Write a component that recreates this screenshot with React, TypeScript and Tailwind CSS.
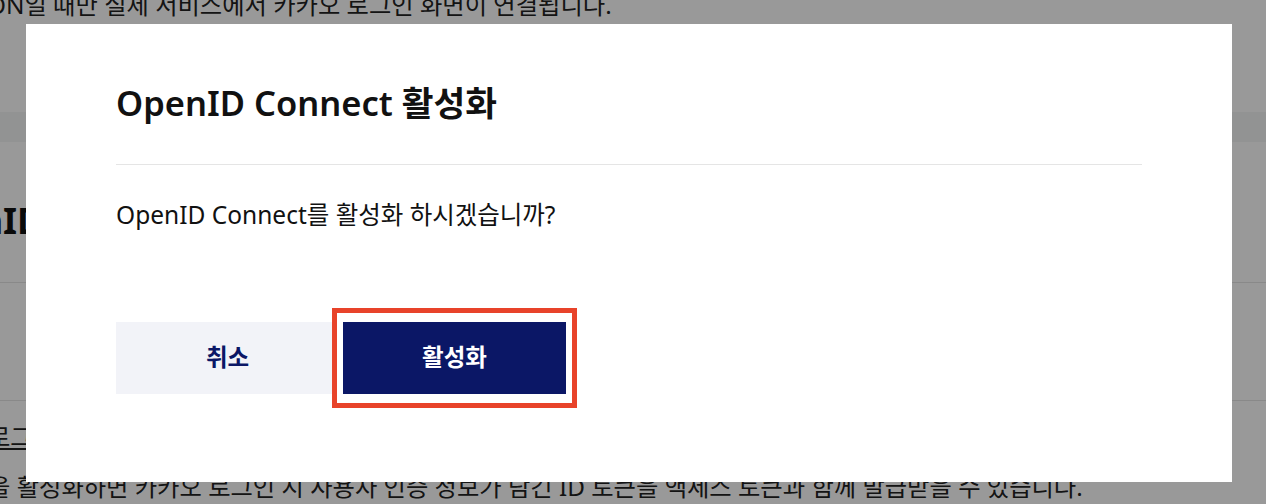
export default function App() {
  return (
    <div className="relative h-[504px] w-full overflow-hidden bg-white font-['Noto_Sans','Noto_Sans_CJK_KR',sans-serif] text-[#222]">
      {/* 뒤쪽 페이지 */}
      <div className="flex flex-col">
        <div className="h-[112px]">
          <p className="-mt-[12px] -ml-[13px] text-[24.3px] leading-[34px] whitespace-nowrap">
            ON일 때만 실제 서비스에서 카카오 로그인 화면이 연결됩니다.
          </p>
        </div>
        <div className="h-[30px] bg-[#f4f6f6]" />
        <div className="h-[140px] pt-[55px]">
          <h2 className="-ml-[93px] text-[36px] leading-[48px] font-bold whitespace-nowrap text-[#111]">
            OpenID Connect
          </h2>
        </div>
        <div className="h-[118px] border-t border-[#e5e5e5]" />
        <div className="border-t border-[#e5e5e5] pt-[19px]">
          <p className="-ml-[12px] text-[24.3px] leading-[34px] whitespace-nowrap">
            <span className="underline">로그인 설정</span>
          </p>
          <p className="mt-[16px] -ml-[12px] text-[24.3px] leading-[34px] whitespace-nowrap">
            을 활성화하면 카카오 로그인 시 사용자 인증 정보가 담긴 ID 토큰을 액세스 토큰과 함께 발급받을 수 있습니다.
          </p>
        </div>
      </div>

      {/* 모달 */}
      <div className="fixed inset-0 bg-black/40 pl-[26px] pt-[24px]">
        <div className="flex h-[458px] w-[1206px] flex-col bg-white px-[90px] pt-[54px]">
          <h3 className="text-[34.5px] leading-[50px] font-semibold text-[#111]">OpenID Connect 활성화</h3>
          <div className="mt-[36px] h-px bg-[#e5e5e5]" />
          <p className="mt-[33px] text-[24.5px] leading-[34px] text-[#111]">
            OpenID Connect를 활성화 하시겠습니까?
          </p>
          <div className="mt-[90px] flex gap-[4px]">
            <button className="h-[72px] w-[223px] bg-[#f2f3f8] text-[23.5px] font-bold text-[#0b1766]">
              취소
            </button>
            <div className="relative">
              <div className="absolute -top-[14px] -bottom-[14px] -left-[11px] -right-[11px] border-[5px] border-[#e8432a] bg-white" />
              <button className="relative h-[72px] w-[223px] bg-[#0b1766] text-[23.5px] font-bold text-white">
                활성화
              </button>
            </div>
          </div>
        </div>
      </div>
    </div>
  )
}
